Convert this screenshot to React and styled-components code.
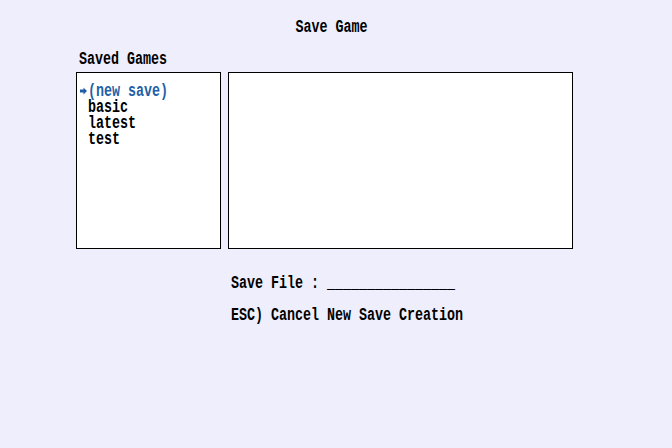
import React from "react";
import styled, { createGlobalStyle } from "styled-components";

const GlobalStyle = createGlobalStyle`
  html, body {
    margin: 0;
    padding: 0;
    background: #eeeefc;
  }
  body {
    font-family: "Liberation Mono", "DejaVu Sans Mono", monospace;
    font-size: 18px;
    font-weight: 700;
    line-height: 16px;
    color: #000;
  }
`;

const Screen = styled.div`
  width: 672px;
  height: 448px;
  box-sizing: border-box;
  padding-top: 19px;
  display: flex;
  flex-direction: column;
  background: #eeeefc;
`;

// the game font is tall and narrow: 8px per cell
const Text = styled.span`
  display: inline-block;
  white-space: pre;
  transform: scaleX(0.741);
  transform-origin: ${(p) => (p.center ? "center" : "left")} center;
`;

const Title = styled.div`
  width: 663px;
  text-align: center;
  height: 16px;
`;

const Label = styled.div`
  margin: 16px 0 5px 79px;
  height: 16px;
`;

const Panels = styled.div`
  display: flex;
  gap: 7px;
  margin-left: 76px;
`;

const Panel = styled.div`
  box-sizing: border-box;
  width: ${(p) => p.w}px;
  height: 177px;
  background: #fff;
  border: 1px solid #000;
  overflow: hidden;
`;

const List = styled.ul`
  list-style: none;
  margin: 0;
  padding: 10px 0 0 3px;
`;

const Item = styled.li`
  display: flex;
  align-items: center;
  height: 16px;
  color: ${(p) => (p.active ? "#1f5fa6" : "#000")};
`;

const Cursor = styled.span`
  flex: none;
  width: 8px;
  height: 16px;
  display: flex;
  align-items: center;
  justify-content: flex-start;
`;

const Prompt = styled.div`
  margin-left: 231px;
  display: flex;
  flex-direction: column;
  gap: 16px;
  margin-top: 26px;
`;

const Line = styled.div`
  height: 16px;
`;

const saves = ["(new save)", "basic", "latest", "test"];

const Arrow = () => (
  <svg width="8" height="8" viewBox="0 0 8 8">
    <path d="M0 2.5h3.5V0.5L7 4 3.5 7.5V5.5H0z" fill="#1f5fa6" />
  </svg>
);

const App = () => {
  return (
    <Screen>
      <GlobalStyle />
      <Title>
        <Text center>Save Game</Text>
      </Title>
      <Label>
        <Text>Saved Games</Text>
      </Label>
      <Panels>
        <Panel w={145}>
          <List>
            {saves.map((name, i) => (
              <Item key={name} active={i === 0}>
                <Cursor>{i === 0 && <Arrow />}</Cursor>
                <Text>{name}</Text>
              </Item>
            ))}
          </List>
        </Panel>
        <Panel w={345} />
      </Panels>
      <Prompt>
        <Line>
          <Text>Save File : ________________</Text>
        </Line>
        <Line>
          <Text>ESC) Cancel New Save Creation</Text>
        </Line>
      </Prompt>
    </Screen>
  );
};

export default App;
